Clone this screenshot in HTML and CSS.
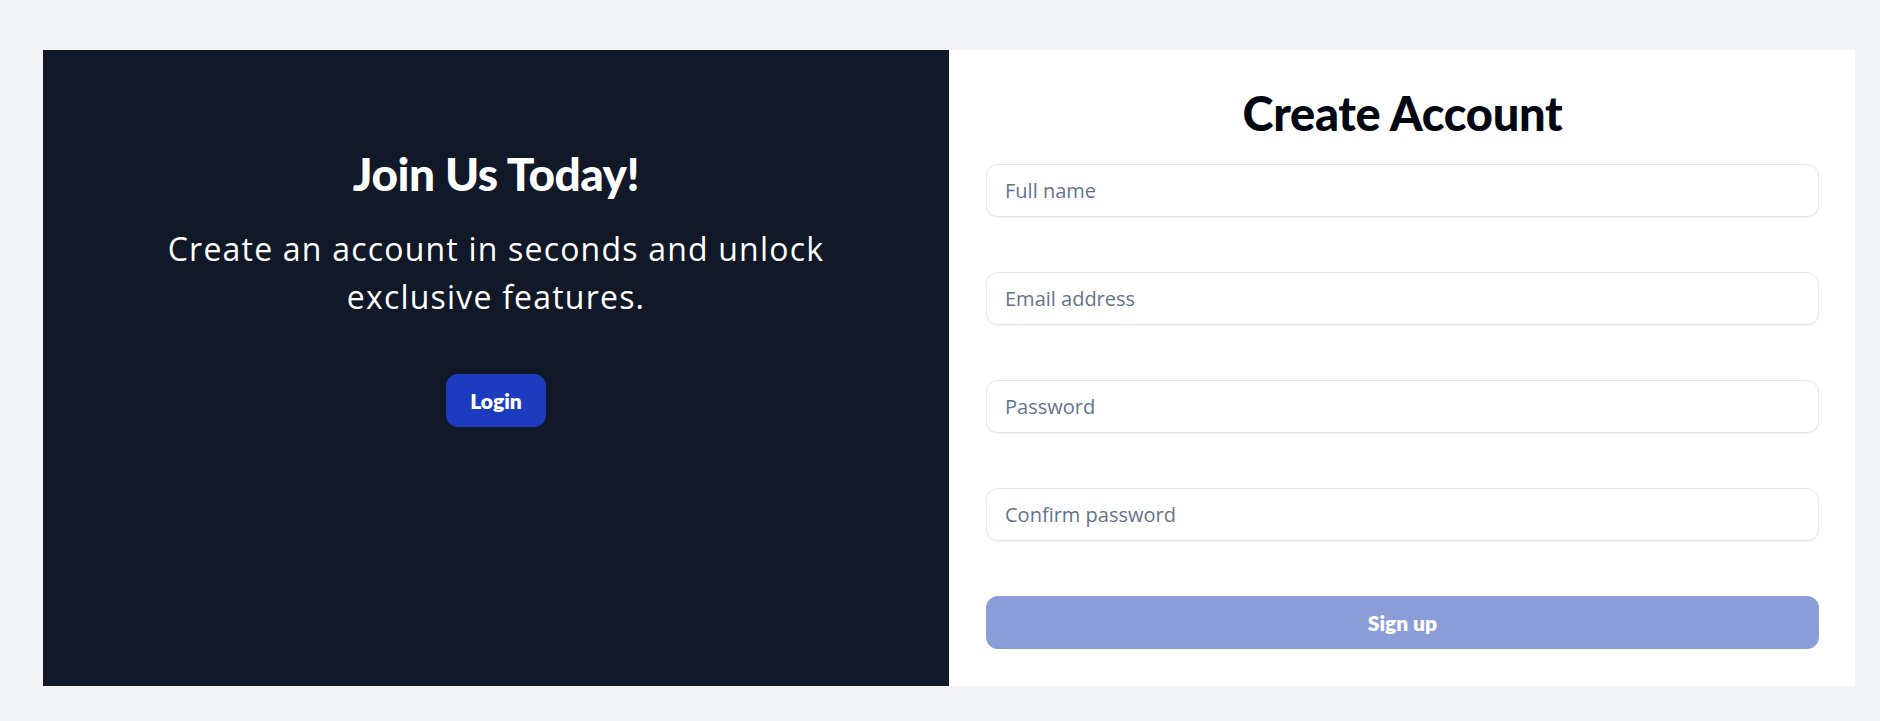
FILE: index.html
```html
<!DOCTYPE html>
<html lang="en">
<head>
<meta charset="utf-8">
<title>Create Account</title>
<link rel="stylesheet" href="styles.css">
</head>
<body>
<main class="card">
  <section class="promo">
    <h2 class="promo-title">Join Us Today!</h2>
    <p class="promo-text">Create an account in seconds and unlock exclusive features.</p>
    <button class="btn-login" type="button">Login</button>
  </section>
  <section class="signup">
    <h1 class="signup-title">Create Account</h1>
    <form class="form">
      <div class="field"><input class="input" type="text" placeholder="Full name"></div>
      <div class="field"><input class="input" type="email" placeholder="Email address"></div>
      <div class="field"><input class="input" type="password" placeholder="Password"></div>
      <div class="field"><input class="input" type="password" placeholder="Confirm password"></div>
      <button class="btn-signup" type="button" disabled>Sign up</button>
    </form>
  </section>
</main>
</body>
</html>
```
FILE: styles.css
```css
* { box-sizing: border-box; }
html, body { margin: 0; }
body {
  background: #f3f4f6;
  padding: 50px 25px 35px 43px;
  font-family: "Open Sans", "Lato", sans-serif;
}
.card {
  display: flex;
  height: 636px;
}
.promo {
  width: 50%;
  min-width: 0;
  background: #111827;
  color: #ffffff;
  display: flex;
  flex-direction: column;
  align-items: center;
  padding: 100px 40px 0;
  text-align: center;
}
.promo-title {
  margin: 0;
  font-family: "Lato", sans-serif;
  font-weight: 900;
  font-size: 46px;
  line-height: 48px;
  letter-spacing: -0.5px;
}
.promo-text {
  margin: 27px 0 0;
  font-size: 32px;
  line-height: 48px;
  letter-spacing: 1.2px;
  max-width: 720px;
}
.btn-login {
  margin-top: 53px;
  width: 100px;
  height: 53px;
  border: 0;
  border-radius: 12px;
  background: #1c3bbf;
  color: #ffffff;
  font-family: "Lato", sans-serif;
  font-weight: 800;
  font-size: 21px;
}
.signup {
  width: 50%;
  min-width: 0;
  background: #ffffff;
  padding: 39px 36px 37px 37px;
  display: flex;
  flex-direction: column;
}
.signup-title {
  margin: 0;
  text-align: center;
  font-family: "Lato", sans-serif;
  font-weight: 900;
  font-size: 47px;
  line-height: 48px;
  color: #030712;
  letter-spacing: -0.3px;
}
.form {
  margin-top: 27px;
  display: flex;
  flex-direction: column;
}
.field {
  margin-bottom: 55px;
}
.input {
  display: block;
  width: 100%;
  height: 53px;
  border: 1px solid #e5e7eb;
  border-radius: 12px;
  box-shadow: 0 1px 2px rgba(0,0,0,0.06);
  padding: 0 18px;
  font-family: "Open Sans", sans-serif;
  font-size: 20px;
  color: #111827;
  background: #fff;
}
.input::placeholder { color: #64748b; }
.btn-signup {
  height: 53px;
  border: 0;
  border-radius: 12px;
  background: #8b9dd8;
  color: #ffffff;
  font-family: "Lato", sans-serif;
  font-weight: 800;
  font-size: 21px;
}
```
